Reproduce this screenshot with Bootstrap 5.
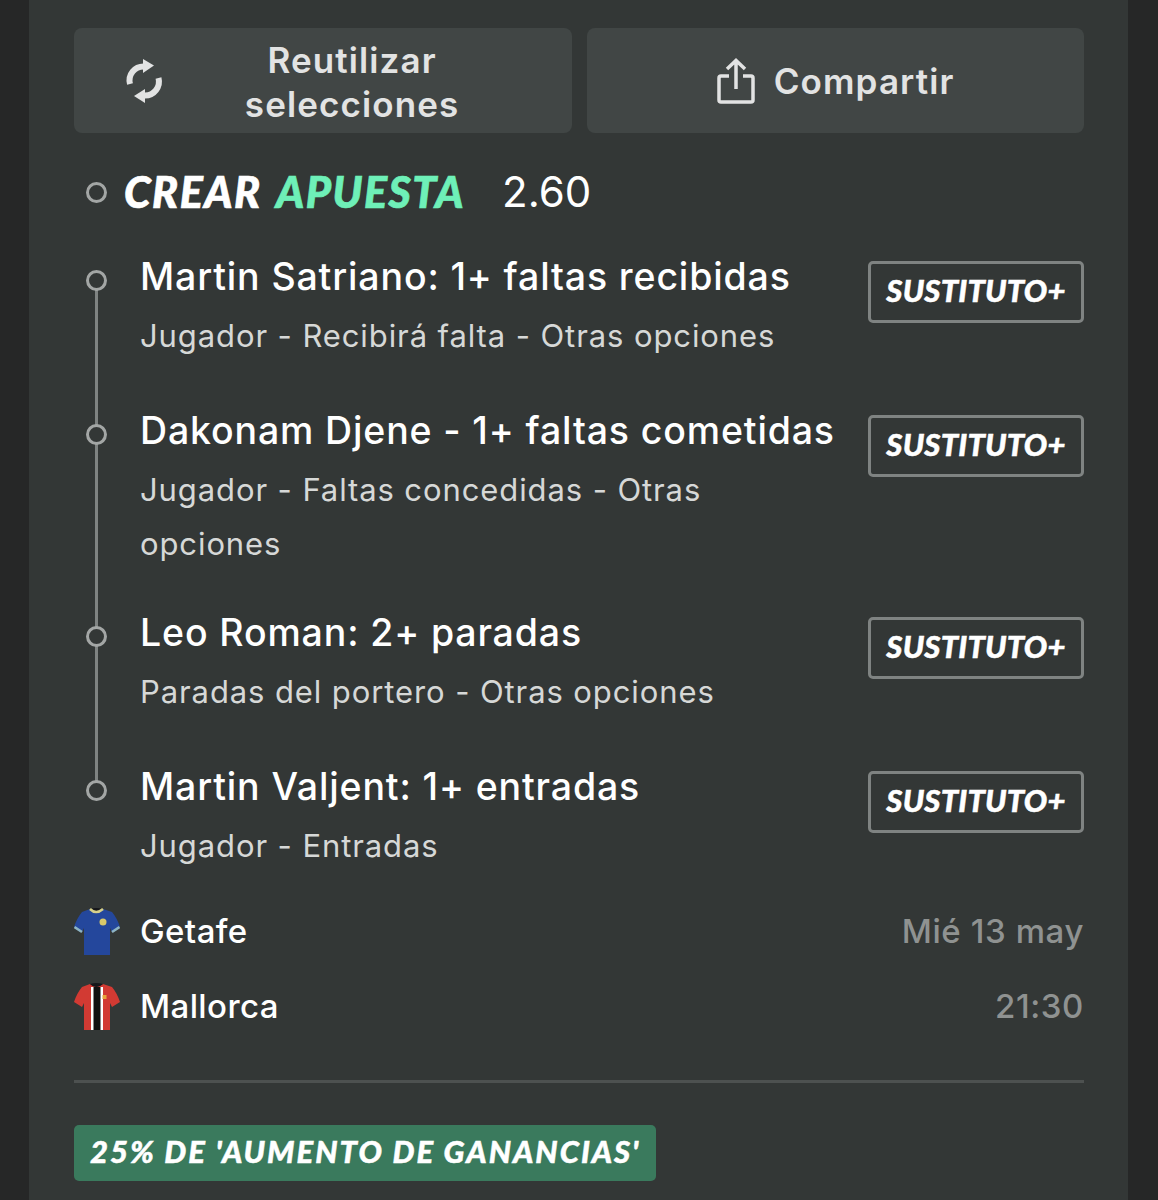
<!DOCTYPE html>
<html lang="es">
<head>
  <meta charset="UTF-8" />
  <meta name="viewport" content="width=device-width, initial-scale=1.0" />
  <title>Crear apuesta</title>
  <link href="https://cdn.jsdelivr.net/npm/bootstrap@5.3.0/dist/css/bootstrap.min.css" rel="stylesheet" />
  <style>
    body { background: #262727; font-family: Inter, "Liberation Sans", sans-serif; overflow: hidden; }
    .slip-panel { margin: 0 30px 0 29px; height: 1200px; padding: 28px 44px 0 45px; background: #333736; color: #fff; }
    .action-row { gap: 15px; }
    .slip-action { height: 105px; background: #414645; border: 0; border-radius: 8px; color: #e2e3e3; font-size: 35px; font-weight: 600; letter-spacing: 1.1px; line-height: 44px; padding: 0; }
    .slip-action:hover, .slip-action:active { background: #414645 !important; color: #e2e3e3 !important; }
    .reuse-action { padding: 0 32px 0 50px; }
    .reuse-label { flex: 1; text-align: center; padding-top: 2px; }
    .share-action { gap: 19px; }
    .heading-row { height: 44px; margin-top: 37px; font-size: 43px; padding-left: 12px; }
    .dot-ring { width: 21px; height: 21px; border: 3px solid #a3a6a5; border-radius: 50%; flex: none; }
    .crear-title { font-family: Lato, "Liberation Sans", sans-serif; font-weight: 900; font-style: italic; line-height: 44px; margin-left: 17px; letter-spacing: 1.5px; word-spacing: 5px; -webkit-text-stroke: 0.7px currentColor; white-space: nowrap; }
    .crear-title em { color: #6ef0b8; }
    .price-text { font-family: Inter, sans-serif; font-size: 42px; font-weight: 400; margin-left: 37px; line-height: 44px; }
    .leg-list { margin-top: 41px; position: relative; }
    .leg-line { position: absolute; left: 21px; top: 22px; bottom: 104px; width: 3px; background: #7f8382; }
    .leg-row { padding-left: 66px; padding-bottom: 46px; position: relative; }
    .leg-row.leg-wrapped { padding-bottom: 40px; }
    .leg-row.leg-last { padding-bottom: 21px; }
    .leg-row .dot-ring { position: absolute; left: 12px; top: 15px; background: #333736; }
    .leg-name { font-size: 37.5px; font-weight: 500; letter-spacing: 0.85px; line-height: 44px; margin-bottom: 10px; white-space: nowrap; }
    .leg-desc { font-size: 31px; letter-spacing: 0.9px; line-height: 54px; color: #d6d8d7; width: 640px; }
    .sub-tag { width: 216px; height: 62px; flex: none; margin-top: 6px; padding-bottom: 4px; border: 3px solid #7f8382; border-radius: 5px; font-family: Lato, "Liberation Sans", sans-serif; font-weight: 900; font-style: italic; font-size: 31px; letter-spacing: 0.2px; -webkit-text-stroke: 0.5px currentColor; display: flex; align-items: center; justify-content: center; color: #fff; }
    .team-row { height: 75px; font-size: 33px; font-weight: 500; letter-spacing: 0.4px; }
    .team-row svg { width: 46px; height: 48px; margin-right: 20px; flex: none; }
    .match-info { margin-left: auto; color: #8f9291; letter-spacing: 0.6px; }
    .slip-rule { height: 3px; background: #4d5150; margin: 36px 0 42px; }
    .boost-tag { display: inline-block; height: 56px; line-height: 53px; padding: 0 16px; background: #3a7a5d; border-radius: 5px; font-family: Lato, "Liberation Sans", sans-serif; font-weight: 900; font-style: italic; font-size: 31px; letter-spacing: 2px; -webkit-text-stroke: 0.5px currentColor; white-space: nowrap; }
  </style>
</head>
<body>
  <div class="slip-panel">
    <div class="d-flex action-row">
      <button class="btn slip-action reuse-action w-50 d-flex align-items-center">
        <svg width="40" height="44" viewBox="0 0 40 44" fill="none">
          <path d="M6 25A14 14 0 0 1 20 7.500" stroke="#e2e3e3" stroke-width="6" />
          <path d="M19 0L30 6.500L19 14Z" fill="#e2e3e3" />
          <path d="M34.500 19A14 14 0 0 1 21 36.500" stroke="#e2e3e3" stroke-width="6" />
          <path d="M21 30L10 37L21 44Z" fill="#e2e3e3" />
        </svg>
        <span class="reuse-label">Reutilizar<br />selecciones</span>
      </button>
      <button class="btn slip-action share-action w-50 d-flex align-items-center justify-content-center">
        <svg width="38" height="46" viewBox="0 0 38 46" fill="none" stroke="#e2e3e3" stroke-width="3.500">
          <path d="M12 18H4A2 2 0 0 0 2 20V42A2 2 0 0 0 4 44H34A2 2 0 0 0 36 42V20A2 2 0 0 0 34 18H26" />
          <path d="M19 31V3M10 11L19 2.500L28 11" />
        </svg>
        <span>Compartir</span>
      </button>
    </div>

    <div class="heading-row d-flex align-items-center">
      <span class="dot-ring"></span>
      <span class="crear-title">CREAR <em>APUESTA</em></span>
      <span class="price-text">2.60</span>
    </div>

    <div class="leg-list">
      <div class="leg-line"></div>
      <div class="leg-row d-flex justify-content-between">
        <span class="dot-ring"></span>
        <div>
          <div class="leg-name">Martin Satriano: 1+ faltas recibidas</div>
          <div class="leg-desc">Jugador - Recibirá falta - Otras opciones</div>
        </div>
        <div class="sub-tag">SUSTITUTO+</div>
      </div>
      <div class="leg-row leg-wrapped d-flex justify-content-between">
        <span class="dot-ring"></span>
        <div>
          <div class="leg-name">Dakonam Djene - 1+ faltas cometidas</div>
          <div class="leg-desc">Jugador - Faltas concedidas - Otras opciones</div>
        </div>
        <div class="sub-tag">SUSTITUTO+</div>
      </div>
      <div class="leg-row d-flex justify-content-between">
        <span class="dot-ring"></span>
        <div>
          <div class="leg-name">Leo Roman: 2+ paradas</div>
          <div class="leg-desc">Paradas del portero - Otras opciones</div>
        </div>
        <div class="sub-tag">SUSTITUTO+</div>
      </div>
      <div class="leg-row leg-last d-flex justify-content-between">
        <span class="dot-ring"></span>
        <div>
          <div class="leg-name">Martin Valjent: 1+ entradas</div>
          <div class="leg-desc">Jugador - Entradas</div>
        </div>
        <div class="sub-tag">SUSTITUTO+</div>
      </div>
    </div>

    <div class="team-row d-flex align-items-center">
      <svg viewBox="0 0 46 48">
        <path d="M16 1L8 4Q3 10 0 19L8 24L10 20V47H36V20L38 24L46 19Q43 10 38 4L29 1Q22 7 16 1Z" fill="#24479c" />
        <path d="M16 1Q22 -1 29 1Q22 7 16 1Z" fill="#15161a" />
        <path d="M16 1Q22 7 29 1" stroke="#d6d08a" stroke-width="2.500" fill="none" />
        <path d="M0.500 19L8 24M45.500 19L38 24" stroke="#8db4c4" stroke-width="2.500" />
        <circle cx="29" cy="14" r="3.500" fill="#d9c96a" />
      </svg>
      <span>Getafe</span>
      <span class="match-info">Mié 13 may</span>
    </div>
    <div class="team-row d-flex align-items-center">
      <svg viewBox="0 0 46 48">
        <path d="M16 1L8 4Q3 10 0 19L8 24L10 20V47H36V20L38 24L46 19Q43 10 38 4L29 1Q22 7 16 1Z" fill="#d23a33" />
        <path d="M16 1Q22 -1 29 1Q22 7 16 1Z" fill="#15161a" />
        <rect x="17" y="4" width="12" height="43" fill="#fff" />
        <rect x="19.500" y="4" width="7" height="43" fill="#111" />
        <rect x="28.500" y="12" width="4" height="4" fill="#e8a33a" />
      </svg>
      <span>Mallorca</span>
      <span class="match-info">21:30</span>
    </div>

    <div class="slip-rule"></div>
    <span class="boost-tag">25% DE 'AUMENTO DE GANANCIAS'</span>
  </div>
  <script src="https://cdn.jsdelivr.net/npm/bootstrap@5.3.0/dist/js/bootstrap.bundle.min.js"></script>
</body>
</html>
